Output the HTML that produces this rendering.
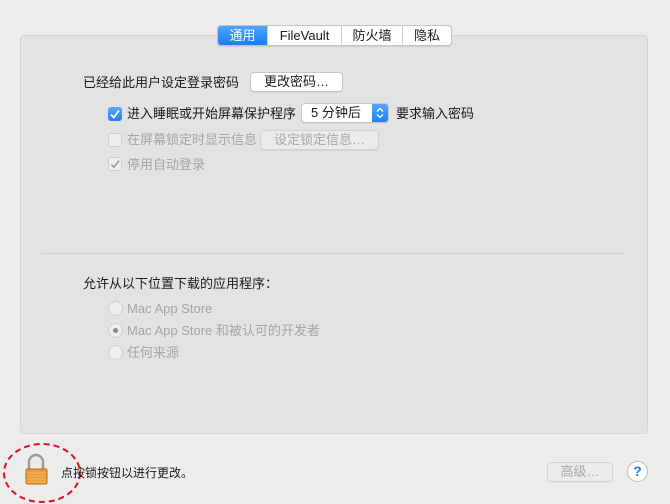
<!DOCTYPE html>
<html><head><meta charset="utf-8"><style>
*{margin:0;padding:0;box-sizing:border-box}
body{width:670px;height:504px;background:#ececec;position:relative;overflow:hidden;font-family:"Liberation Sans","Noto Sans CJK SC",sans-serif;font-size:13px;color:#1a1a1a}
.abs{position:absolute;white-space:nowrap;line-height:15px}
.panel{position:absolute;left:20px;top:35px;width:628px;height:399px;background:#e3e3e3;border:1px solid #d5d5d5;border-radius:4px}
.tabs{position:absolute;left:217px;top:25px;height:21px;display:flex;border:1px solid #c4c4c4;border-radius:4px;background:#fff;overflow:hidden;box-shadow:0 1px 1px rgba(0,0,0,.1)}
.tabs div{height:19px;line-height:19px;text-align:center;font-size:13px;border-left:1px solid #d0d0d0}
.tabs div:first-child{border-left:none;background:linear-gradient(#4ea5fd,#1a7cf9);color:#fff}
.btn{position:absolute;height:20px;background:#fff;border:1px solid #c6c6c6;border-radius:4px;text-align:center;line-height:18px;font-size:13px;box-shadow:0 1px 0 rgba(0,0,0,.05)}
.dis{color:#a8a8a8;background:#ebebeb;border-color:#d3d3d3}
.cb{position:absolute;width:14px;height:14px;border-radius:3px}
.radio{position:absolute;width:15px;height:15px;border-radius:50%;border:1px solid #cfcfcf;background:#eeeeee}
.gray{color:#a5a5a5}
</style></head><body>
<div class="panel"></div>
<div class="tabs"><div style="width:49px">通用</div><div style="width:74px">FileVault</div><div style="width:61px">防火墙</div><div style="width:49px">隐私</div></div>

<div class="abs" style="left:83px;top:75px">已经给此用户设定登录密码</div>
<div class="btn" style="left:250px;top:72px;width:93px">更改密码…</div>

<div class="cb" style="left:108px;top:107px;background:linear-gradient(#55a8fd,#1e7ff8)"><svg width="14" height="14"><path d="M3 7.5l2.8 3L11 3.5" stroke="#fff" stroke-width="1.8" fill="none"/></svg></div>
<div class="abs" style="left:127px;top:106px">进入睡眠或开始屏幕保护程序</div>
<div class="btn" style="left:301px;top:103px;width:88px;text-align:left;padding-left:9px;overflow:hidden">5 分钟后<div style="position:absolute;right:0;top:0;width:16px;height:18px;background:linear-gradient(#55a8fd,#1e7ff8)"><svg width="16" height="18"><path d="M5 7.5l3-3 3 3M5 10.5l3 3 3-3" stroke="#fff" stroke-width="1.3" fill="none"/></svg></div></div>
<div class="abs" style="left:396px;top:106px">要求输入密码</div>

<div class="cb" style="left:108px;top:133px;border:1px solid #d0d0d0;background:#eee"></div>
<div class="abs gray" style="left:127px;top:132px">在屏幕锁定时显示信息</div>
<div class="btn dis" style="left:260px;top:130px;width:119px">设定锁定信息…</div>

<div class="cb" style="left:108px;top:157px;border:1px solid #d0d0d0;background:#eee"><svg width="12" height="12"><path d="M2.5 6.5l2.5 2.8L10 2.5" stroke="#9a9a9a" stroke-width="1.5" fill="none"/></svg></div>
<div class="abs gray" style="left:127px;top:157px">停用自动登录</div>

<div style="position:absolute;left:42px;top:253px;width:583px;height:1px;background:#cfcfcf"></div>

<div class="abs" style="left:83px;top:276px">允许从以下位置下载的应用程序：</div>
<div class="radio" style="left:108px;top:301px"></div>
<div class="abs gray" style="left:127px;top:301px">Mac App Store</div>
<div class="radio" style="left:108px;top:323px"><div style="position:absolute;left:4px;top:4px;width:5px;height:5px;border-radius:50%;background:#888"></div></div>
<div class="abs gray" style="left:127px;top:323px">Mac App Store 和被认可的开发者</div>
<div class="radio" style="left:108px;top:345px"></div>
<div class="abs gray" style="left:127px;top:345px">任何来源</div>

<svg style="position:absolute;left:0;top:440px" width="90" height="64">
<path d="M29 31v-9a7 7 0 0 1 14 0v9" stroke="#9c9c9c" stroke-width="2.5" fill="none"/>
<rect x="26" y="29" width="21" height="15" rx="1.5" fill="#e99c3c" stroke="#b86e1c"/>
<path d="M27 33h19M27 36h19M27 39h19M27 42h19" stroke="#f5c274" stroke-width=".8"/>
<ellipse cx="42" cy="33" rx="38" ry="29" fill="none" stroke="#e01020" stroke-width="2" stroke-dasharray="6 4"/>
</svg>
<div class="abs" style="left:61px;top:466px;font-size:12px">点按锁按钮以进行更改。</div>

<div class="btn dis" style="left:547px;top:462px;width:66px">高级…</div>
<div style="position:absolute;left:627px;top:461px;width:21px;height:21px;border-radius:50%;background:#fff;border:1px solid #bcbcbc;color:#1a7cf9;text-align:center;line-height:19px;font-size:14px;font-weight:bold">?</div>
</body></html>
